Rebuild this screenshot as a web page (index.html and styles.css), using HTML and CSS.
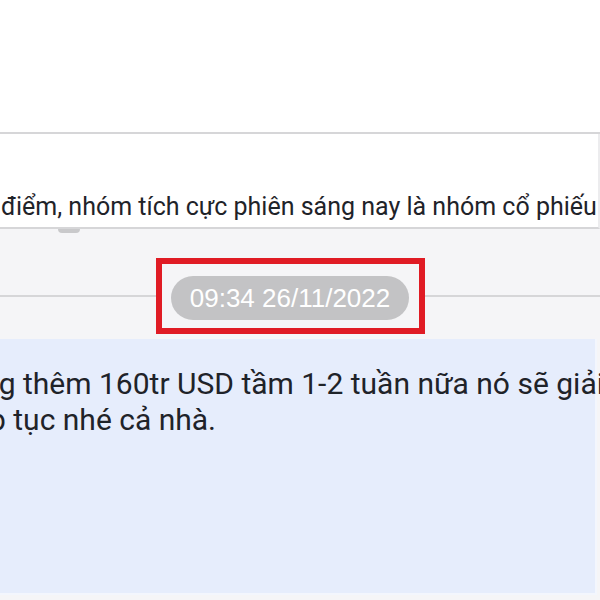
FILE: index.html
```html
<!DOCTYPE html>
<html lang="vi">
<head>
    <meta charset="UTF-8">
    <meta name="viewport" content="width=device-width, initial-scale=1.0">
    <title>Tin nhắn nhóm</title>
    <link rel="stylesheet" href="styles.css">
</head>
<body>
    <div class="top-space"></div>

    <div class="message-card">
        <p class="message-text">điểm, nhóm tích cực phiên sáng nay là nhóm cổ phiếu</p>
        <div class="reaction-tail"></div>
    </div>

    <div class="time-row">
        <div class="time-line"></div>
        <div class="highlight">
            <span class="time-pill">09:34 26/11/2022</span>
        </div>
        <div class="time-line"></div>
    </div>

    <div class="my-bubble">
        <p class="bubble-line">tăng thêm 160tr USD tầm 1-2 tuần nữa nó sẽ giải</p>
        <p class="bubble-line">tiếp tục nhé cả nhà.</p>
    </div>
</body>
</html>
```

FILE: styles.css
```css
:root {
    --text-color: #1f2329;
    --line-color: #d6d6d8;
    --chat-bg: #f5f5f7;
    --bubble-bg: #e6edfc;
    --pill-bg: #c3c3c5;
    --mark-red: #e01b24;
}

body {
    margin: 0;
    width: 600px;
    height: 600px;
    overflow: hidden;
    font-family: Roboto, "Noto Sans", Arial, sans-serif;
    color: var(--text-color);
    background: var(--chat-bg);
}

p {
    margin: 0;
}

.top-space {
    height: 132px;
    background: #ffffff;
    border-bottom: 2px solid var(--line-color);
}

.message-card {
    position: relative;
    height: 95px;
    background: #ffffff;
    border-right: 2px solid #ececee;
    border-bottom: 2px solid var(--line-color);
    display: flex;
    align-items: flex-end;
    padding: 0 0 5px 1px;
    box-sizing: border-box;
}

.message-text {
    font-size: 25px;
    line-height: 30px;
    white-space: nowrap;
}

.reaction-tail {
    position: absolute;
    left: 58px;
    bottom: -6px;
    width: 22px;
    height: 4px;
    border-radius: 0 0 12px 12px;
    background: #c9c9cb;
}

.time-row {
    height: 110px;
    display: grid;
    grid-template-columns: 156px auto 1fr;
    align-items: center;
    padding-top: 23px;
    box-sizing: border-box;
}

.time-line {
    height: 2px;
    background: var(--line-color);
}

.highlight {
    border: 6px solid var(--mark-red);
    background: var(--chat-bg);
    padding: 12px 10px 8px 9px;
    display: flex;
}

.time-pill {
    width: 238px;
    height: 44px;
    border-radius: 22px;
    background: var(--pill-bg);
    color: #ffffff;
    font-family: "Liberation Sans", Arial, sans-serif;
    font-size: 26px;
    line-height: 44px;
    text-align: center;
}

.my-bubble {
    width: 597px;
    height: 256px;
    background: var(--bubble-bg);
    border-right: 2px solid #f3f6fd;
    border-bottom: 2px solid #f3f6fd;
    padding-top: 27px;
    box-sizing: border-box;
}

.bubble-line {
    margin-left: -44px;
    font-size: 30px;
    line-height: 36px;
    white-space: nowrap;
}
```
